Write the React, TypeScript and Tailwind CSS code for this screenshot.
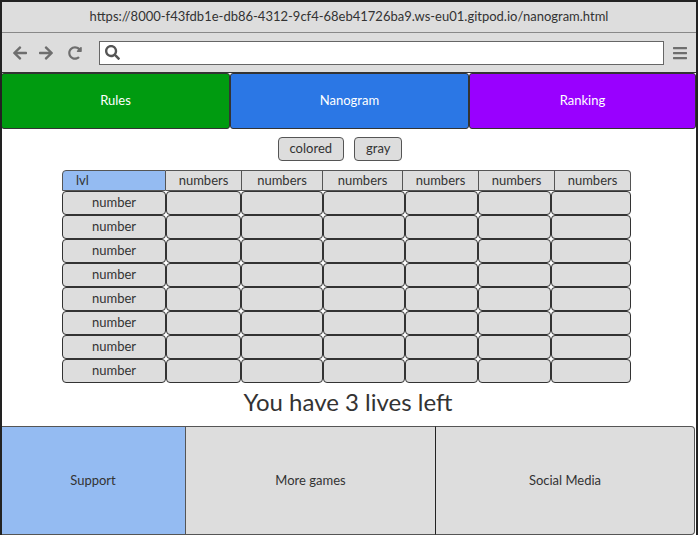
import { FaArrowLeft, FaArrowRight, FaRedoAlt, FaSearch, FaBars } from "react-icons/fa";

const headCols = [76, 76, 81, 80, 76, 76, 76];
const bodyCols = [75, 82, 82, 73, 73, 80];
const rows = Array.from({ length: 8 });

export default function App() {
    return (
        <div className="w-[698px] h-[535px] flex flex-col bg-white border-x-2 border-t-2 border-[#222] text-[#333] font-['Lato','Open_Sans',sans-serif] overflow-hidden">
            {/* browser chrome */}
            <div className="h-[31px] flex items-center justify-center bg-[#dddddd] border-b border-[#888] text-[13px]">
                https://8000-f43fdb1e-db86-4312-9cf4-68eb41726ba9.ws-eu01.gitpod.io/nanogram.html
            </div>
            <div className="h-[40px] flex items-center bg-[#dddddd] border-b border-[#333] pl-[10px] pr-[8px]">
                <div className="flex items-center gap-[10px] text-[#6e6e6e]">
                    <FaArrowLeft size={16} />
                    <FaArrowRight size={16} />
                    <FaRedoAlt size={14} className="ml-[4px]" />
                </div>
                <div className="ml-[17px] flex-1 h-[24px] bg-white border border-[#666] flex items-center pl-[5px] text-[#555]">
                    <FaSearch size={15} />
                </div>
                <FaBars size={16} className="ml-[8px] text-[#6e6e6e]" />
            </div>

            {/* nav */}
            <div className="h-[56px] flex text-white text-[13px] -ml-[1px]">
                <div className="w-[229px] flex items-center justify-center bg-[#009b10] border border-[#333] rounded-[3px]">Rules</div>
                <div className="w-[239px] flex items-center justify-center bg-[#2b77e5] border border-[#333] rounded-[3px]">Nanogram</div>
                <div className="flex-1 flex items-center justify-center bg-[#9900ff] border border-[#333] rounded-[3px]">Ranking</div>
            </div>

            {/* buttons */}
            <div className="mt-[8px] flex justify-center gap-[10px] text-[13px] pr-[18px]">
                <button className="h-[24px] px-[11px] bg-[#dddddd] border border-[#555] rounded-[4px]">colored</button>
                <button className="h-[24px] px-[11px] bg-[#dddddd] border border-[#555] rounded-[4px]">gray</button>
            </div>

            {/* grid */}
            <div className="mt-[9px] ml-[60px] flex flex-col text-[13px]">
                <div className="flex h-[21px]">
                    <div className="w-[104px] bg-[#94bbf2] border border-[#555] rounded-tl-[4px] pl-[13px] flex items-center">lvl</div>
                    {headCols.slice(1).map((w, i) => (
                        <div key={i} style={{ width: w }} className={`bg-[#dddddd] border border-l-0 border-[#555] flex items-center justify-center ${i === 5 ? "rounded-tr-[4px]" : ""}`}>numbers</div>
                    ))}
                </div>
                {rows.map((_, r) => (
                    <div key={r} className="flex h-[24px]">
                        <div className="w-[104px] bg-[#dddddd] border-[1.5px] border-[#333] rounded-[4px] flex items-center justify-center">number</div>
                        {bodyCols.map((w, i) => (
                            <div key={i} style={{ width: w }} className="bg-[#dddddd] border-[1.5px] border-[#333] rounded-[4px]" />
                        ))}
                    </div>
                ))}
            </div>

            <div className="mt-[4px] text-center text-[24px] leading-[30px] pr-[2px]">You have 3 lives left</div>

            {/* footer */}
            <div className="mt-[9px] flex-1 flex text-[13px] -ml-[2px] -mr-[2px]">
                <div className="w-[185px] flex items-center justify-center bg-[#94bbf2] border border-[#555] border-r-0">Support</div>
                <div className="w-[251px] flex items-center justify-center bg-[#dddddd] border border-[#555] border-r-[#222]">More games</div>
                <div className="w-[259px] flex items-center justify-center bg-[#dddddd] border border-l-0 border-[#555] rounded-tr-[4px] rounded-br-[4px]">Social Media</div>
            </div>
        </div>
    );
}
